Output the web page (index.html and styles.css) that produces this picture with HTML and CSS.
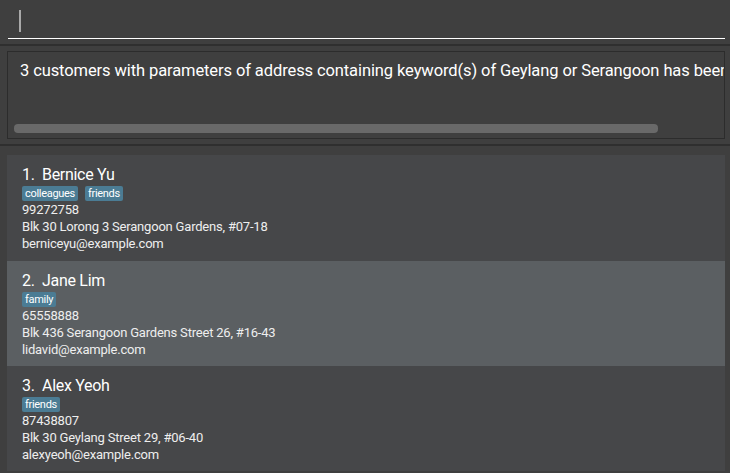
FILE: index.html
```html
<!DOCTYPE html>
<html>
<head>
<meta charset="utf-8">
<link rel="stylesheet" href="styles.css">
</head>
<body>
<div class="app">
  <div class="command">
    <div class="command-field"><span class="caret"></span></div>
  </div>
  <div class="sep"></div>
  <div class="result-wrap">
    <div class="result-box">
      <div class="result-text">3 customers with parameters of address containing keyword(s) of Geylang or Serangoon has been listed!</div>
      <div class="scrollbar"></div>
    </div>
  </div>
  <div class="sep"></div>
  <div class="list">
    <div class="card">
      <div class="name"><span class="idx">1.</span>Bernice Yu</div>
      <div class="tags"><span class="tag">colleagues</span><span class="tag">friends</span></div>
      <div class="field">99272758</div>
      <div class="field">Blk 30 Lorong 3 Serangoon Gardens, #07-18</div>
      <div class="field">berniceyu@example.com</div>
    </div>
    <div class="card selected">
      <div class="name"><span class="idx">2.</span>Jane Lim</div>
      <div class="tags"><span class="tag">family</span></div>
      <div class="field">65558888</div>
      <div class="field">Blk 436 Serangoon Gardens Street 26, #16-43</div>
      <div class="field">lidavid@example.com</div>
    </div>
    <div class="card">
      <div class="name"><span class="idx">3.</span>Alex Yeoh</div>
      <div class="tags"><span class="tag">friends</span></div>
      <div class="field">87438807</div>
      <div class="field">Blk 30 Geylang Street 29, #06-40</div>
      <div class="field">alexyeoh@example.com</div>
    </div>
  </div>
</div>
</body>
</html>
```

FILE: styles.css
```css
html, body {
  margin: 0;
  padding: 0;
  background: #3f3f3f;
  height: 100%;
  overflow: hidden;
}

.app {
  width: 730px;
  height: 473px;
  display: flex;
  flex-direction: column;
  font-family: Roboto, "Liberation Sans", sans-serif;
  color: #ffffff;
}

.command {
  height: 44px;
  padding: 0 5px 0 8px;
}

.command-field {
  height: 38px;
  border-bottom: 1px solid #ffffff;
  display: flex;
  align-items: flex-start;
  padding-left: 11px;
}

.caret {
  display: block;
  width: 2px;
  height: 22px;
  margin-top: 10px;
  background: #a9a9a9;
}

.sep {
  height: 2px;
  background: #2f2f2f;
}

.result-wrap {
  padding: 5px 5px 5px 7px;
}

.result-box {
  height: 86px;
  border: 1px solid #2c2c2c;
  display: flex;
  flex-direction: column;
  overflow: hidden;
}

.result-text {
  white-space: nowrap;
  font-size: 16.5px;
  letter-spacing: -0.1px;
  padding: 9px 0 0 12px;
  height: 72px;
  color: #ffffff;
  box-sizing: border-box;
  overflow: hidden;
}

.scrollbar {
  margin-left: 6px;
  width: 644px;
  height: 9px;
  border-radius: 4px;
  background: #696969;
}

.list {
  padding: 9px 5px 0 7px;
  display: flex;
  flex-direction: column;
}

.card {
  background: #464749;
  height: 105px;
  padding: 10px 0 0 15px;
  box-sizing: border-box;
}

.card:first-child {
  height: 106px;
}

.card.selected {
  background: #5b5f62;
}

.name {
  font-size: 16px;
  line-height: 20px;
  letter-spacing: -0.3px;
  color: #ffffff;
}

.idx {
  display: inline-block;
  width: 20px;
}

.tags {
  display: flex;
  gap: 7px;
  margin: 1px 0 0 0;
}

.tag {
  background: #4b7c94;
  color: #ffffff;
  font-size: 11px;
  line-height: 15px;
  letter-spacing: -0.3px;
  padding: 0 3px;
  border-radius: 2px;
}

.field {
  font-size: 13px;
  line-height: 17px;
  letter-spacing: -0.2px;
  color: #eeeeee;
}
```
